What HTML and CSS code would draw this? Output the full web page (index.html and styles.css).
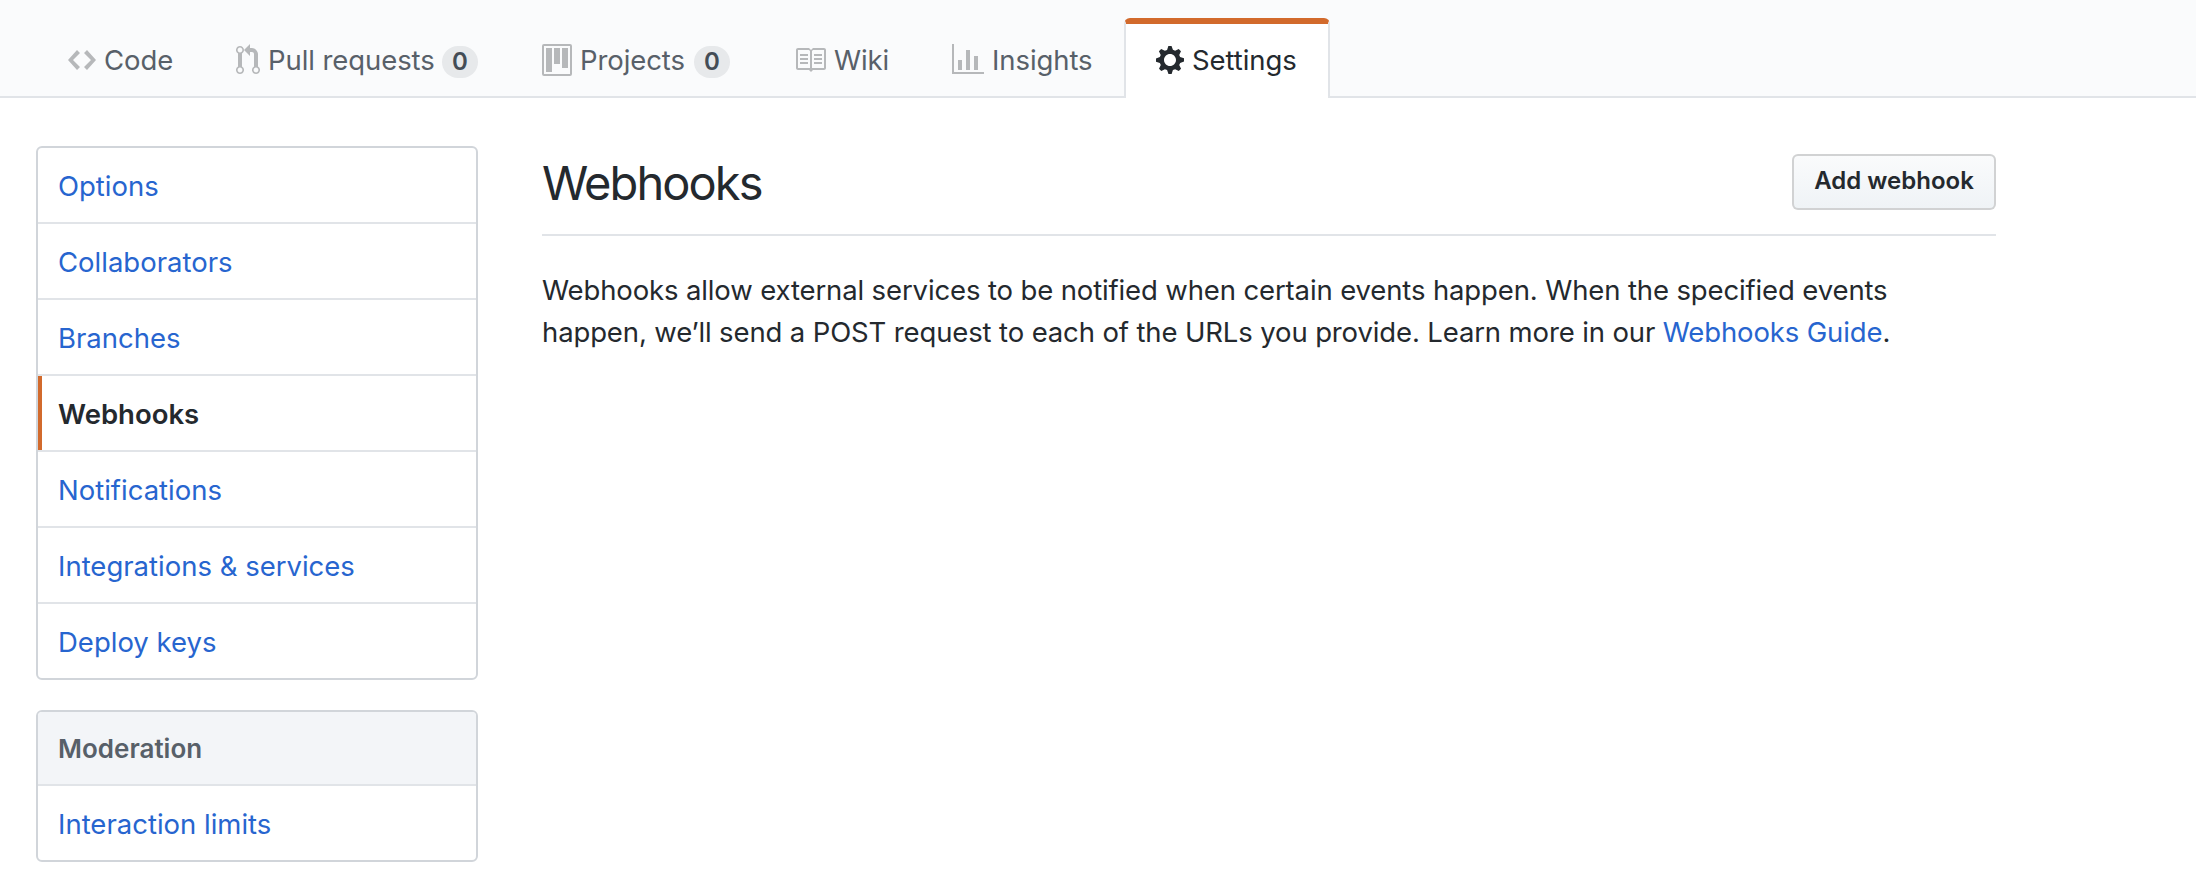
FILE: index.html
```html
<!DOCTYPE html>
<html lang="en">
<head>
<meta charset="utf-8">
<title>Webhooks</title>
<link rel="stylesheet" href="styles.css">
</head>
<body>
<header class="repo-head">
  <nav class="tabs">
    <a class="tab tab-code"><svg class="icon" width="28" height="32" viewBox="0 0 14 16"><path d="M9.5 3L8 4.5 11.5 8 8 11.5 9.5 13 14 8 9.5 3zm-5 0L0 8l4.5 5L6 11.5 2.5 8 6 4.5 4.5 3z"/></svg><span class="label">Code</span></a>
    <a class="tab tab-pulls"><svg class="icon" width="24" height="32" viewBox="0 0 12 16"><path fill-rule="evenodd" d="M11 11.28V5c-.03-.78-.34-1.47-.94-2.06C9.46 2.35 8.78 2.03 8 2H7V0L4 3l3 3V4h1c.27.02.48.11.69.31.21.2.3.42.31.69v6.28A1.993 1.993 0 0 0 10 15a1.993 1.993 0 0 0 1-3.72zm-1 2.92c-.66 0-1.2-.55-1.2-1.2 0-.65.55-1.2 1.2-1.2.65 0 1.2.55 1.2 1.2 0 .65-.55 1.2-1.2 1.2zM4 3c0-1.11-.89-2-2-2a1.993 1.993 0 0 0-1 3.72v6.56A1.993 1.993 0 0 0 2 15a1.993 1.993 0 0 0 1-3.72V4.72c.59-.34 1-.98 1-1.72zm-.8 10c0 .66-.55 1.2-1.2 1.2-.65 0-1.2-.55-1.2-1.2 0-.65.55-1.2 1.2-1.2.65 0 1.2.55 1.2 1.2zM2 4.2C1.34 4.2.8 3.65.8 3c0-.65.55-1.2 1.2-1.2.65 0 1.2.55 1.2 1.2 0 .65-.55 1.2-1.2 1.2z"/></svg><span class="label">Pull requests</span><span class="counter">0</span></a>
    <a class="tab tab-projects"><svg class="icon" width="30" height="32" viewBox="0 0 15 16"><path fill-rule="evenodd" d="M1 0h13a1 1 0 0 1 1 1v14a1 1 0 0 1-1 1H1a1 1 0 0 1-1-1V1a1 1 0 0 1 1-1zm0 1v14h13V1zM2 2h3v12H2zM6 2h3v8H6zM10 2h3v10h-3z"/></svg><span class="label">Projects</span><span class="counter">0</span></a>
    <a class="tab tab-wiki"><svg class="icon" width="32" height="32" viewBox="0 0 16 16"><path fill-rule="evenodd" d="M3 5h4v1H3V5zm0 3h4V7H3v1zm0 2h4V9H3v1zm11-5h-4v1h4V5zm0 2h-4v1h4V7zm0 2h-4v1h4V9zm2-6v9c0 .55-.45 1-1 1H9.500l-1 1-1-1H2c-.55 0-1-.45-1-1V3c0-.55.45-1 1-1h5.500l1 1 1-1H15c.55 0 1 .45 1 1zm-8 .5L7.500 3H2v9h6V3.500zm7-.5H9.500l-.5.5V12h6V3z"/></svg><span class="label">Wiki</span></a>
    <a class="tab tab-insights"><svg class="icon" width="32" height="32" viewBox="0 0 16 16"><path d="M16 14v1H0V0h1v14h15zM5 13H3V8h2v5zm4 0H7V3h2v10zm4 0h-2V6h2v7z"/></svg><span class="label">Insights</span></a>
    <a class="tab tab-settings selected"><svg class="icon" width="28" height="32" viewBox="0 0 14 16"><path fill-rule="evenodd" d="M14 8.770v-1.600l-1.940-.640-.450-1.090.880-1.840-1.130-1.130-1.810.910-1.090-.450-.690-1.920h-1.600l-.630 1.940-1.110.450-1.840-.880-1.130 1.130.910 1.810-.450 1.090L0 7.230v1.590l1.940.640.450 1.090-.880 1.840 1.130 1.130 1.810-.910 1.090.450.690 1.920h1.590l.630-1.940 1.110-.450 1.840.880 1.130-1.130-.920-1.810.470-1.090L14 8.750v.020zM7 11c-1.660 0-3-1.340-3-3s1.340-3 3-3 3 1.340 3 3-1.340 3-3 3z"/></svg><span class="label">Settings</span></a>
  </nav>
</header>
<main class="page">
  <aside class="sidebar">
    <nav class="menu">
      <a class="menu-item">Options</a>
      <a class="menu-item">Collaborators</a>
      <a class="menu-item">Branches</a>
      <a class="menu-item current">Webhooks</a>
      <a class="menu-item">Notifications</a>
      <a class="menu-item">Integrations &amp; services</a>
      <a class="menu-item">Deploy keys</a>
    </nav>
    <nav class="menu">
      <h3 class="menu-heading">Moderation</h3>
      <a class="menu-item">Interaction limits</a>
    </nav>
  </aside>
  <section class="content">
    <div class="subhead">
      <h2 class="title">Webhooks</h2>
      <button class="btn">Add webhook</button>
    </div>
    <p class="intro">Webhooks allow external services to be notified when certain events happen. When the specified events happen, we’ll send a POST request to each of the URLs you provide. Learn more in our <a class="link">Webhooks Guide</a>.</p>
  </section>
</main>
</body>
</html>
```
FILE: styles.css
```css
* { box-sizing: border-box; }
body {
  margin: 0;
  background: #fff;
  color: #24292e;
  font-family: Inter, "Liberation Sans", sans-serif;
  font-size: 27.5px;
  line-height: 42px;
}
.repo-head {
  height: 98px;
  padding: 18px 0 0 36px;
  background: #fafbfc;
  border-bottom: 2px solid #e1e4e8;
}
.tabs { display: flex; height: 80px; }
.tab {
  display: flex;
  align-items: center;
  height: 80px;
  padding: 0 30px;
  border: solid transparent;
  border-width: 6px 2px 0;
  border-radius: 6px 6px 0 0;
  color: #586069;
  letter-spacing: -.08px;
  white-space: nowrap;
}
.tab-code { width: 168px; }
.tab-pulls { width: 306px; }
.tab-projects { width: 252px; }
.tab-wiki { width: 158px; }
.tab-insights { width: 204px; }
.tab-settings { width: 206px; }
.tab.selected {
  background: #fff;
  border-color: #d26a2c #e1e4e8 transparent;
  color: #24292e;
}
.icon { flex: none; margin: 0 8px 2px 0; fill: #b6b8ba; }
.selected .icon { fill: #24292e; }
.tab .label { margin-bottom: 2px; }
.counter {
  width: 36px;
  height: 32px;
  margin: 2px 0 0 auto;
  border-radius: 20px;
  background: #e7e9eb;
  color: #444d56;
  font-size: 24px;
  font-weight: 600;
  line-height: 31px;
  text-align: center;
}
.page { display: flex; gap: 64px; padding: 48px 0 0 36px; }
.sidebar { width: 442px; flex: none; }
.menu {
  margin-bottom: 30px;
  border: 2px solid #d1d5da;
  border-radius: 6px;
  overflow: hidden;
}
.menu-item {
  display: flex;
  align-items: center;
  height: 76px;
  padding: 2px 20px 0;
  border-bottom: 2px solid #e1e4e8;
  color: #2765cf;
}
.menu-item:last-child { height: 74px; border-bottom: 0; }
.menu-item.current {
  box-shadow: inset 4px 0 0 #d26a2c;
  color: #24292e;
  font-weight: 600;
}
.menu-heading {
  display: flex;
  align-items: center;
  height: 74px;
  margin: 0;
  padding: 1px 20px 0;
  border-bottom: 2px solid #e1e4e8;
  background: #f3f5f8;
  color: #586069;
  font-size: 26px;
  font-weight: 600;
}
.content { width: 1454px; }
.subhead {
  display: flex;
  justify-content: space-between;
  height: 90px;
  padding-top: 8px;
  border-bottom: 2px solid #e1e4e8;
}
.title {
  margin: 0;
  font-size: 47px;
  font-weight: 400;
  letter-spacing: -1.9px;
  line-height: 58px;
}
.btn {
  width: 204px;
  height: 56px;
  padding: 0 0 2px;
  border: 2px solid rgba(27, 31, 35, .2);
  border-radius: 6px;
  background: #eff3f6 linear-gradient(#fafbfc, #eff3f6) padding-box;
  color: #24292e;
  font: 600 24px/50px Inter, "Liberation Sans", sans-serif;
  white-space: nowrap;
}
.intro { margin: 33px 0 0; letter-spacing: -.13px; }
.link { color: #2765cf; }
```
